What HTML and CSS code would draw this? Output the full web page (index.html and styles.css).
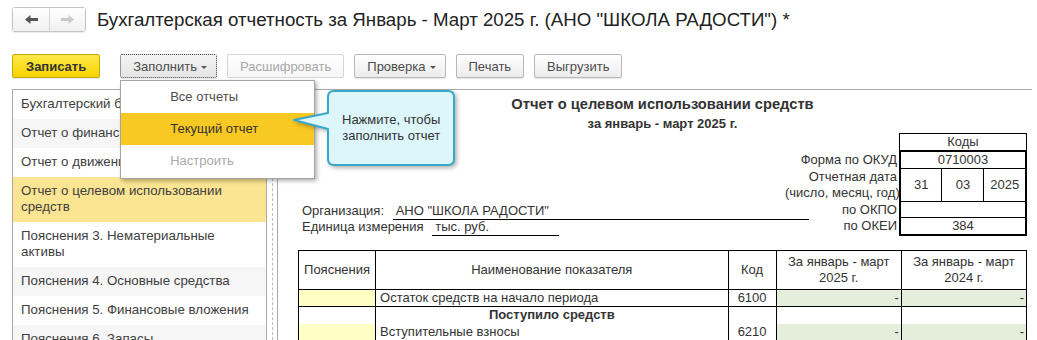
FILE: index.html
```html
<!DOCTYPE html>
<html lang="ru">
<head>
    <meta charset="UTF-8">
    <title>Бухгалтерская отчетность</title>
    <link rel="stylesheet" href="styles.css">
</head>
<body>
    <div class="header">
        <div class="nav">
            <button class="nav-btn" title="Назад">
                <svg width="13" height="9" viewBox="0 0 13 9"><path d="M0 4.5 L5.5 0 V3 H13 V6 H5.5 V9 Z" fill="#555"/></svg>
            </button>
            <button class="nav-btn" title="Вперед">
                <svg width="13" height="9" viewBox="0 0 13 9"><path d="M13 4.5 L7.5 0 V3 H0 V6 H7.5 V9 Z" fill="#c9c9c9"/></svg>
            </button>
        </div>
        <h1>Бухгалтерская отчетность за Январь - Март 2025 г. (АНО "ШКОЛА РАДОСТИ") *</h1>
    </div>

    <div class="toolbar">
        <button class="btn btn-primary">Записать</button>
        <div class="dropdown">
            <button class="btn btn-menu btn-focused">Заполнить<span class="caret"></span></button>
            <div class="menu">
                <div class="menu-item">Все отчеты</div>
                <div class="menu-item active">Текущий отчет</div>
                <div class="menu-item disabled">Настроить</div>

                <!-- hint bubble pointing at the current item -->
                <div class="callout">
                    <svg class="callout-shape" width="170" height="82" viewBox="0 0 170 82">
                        <path d="M43 3 H157 Q163 3 163 9 V71 Q163 77 157 77 H43 Q37 77 37 71 V41 L3 32 L37 25 V9 Q37 3 43 3 Z" fill="#dcf6fc" stroke="#38a8ca" stroke-width="2" stroke-linejoin="round"/>
                    </svg>
                    <div class="callout-text">Нажмите, чтобы<br>заполнить отчет</div>
                </div>
            </div>
        </div>
        <button class="btn" disabled>Расшифровать</button>
        <button class="btn btn-menu">Проверка<span class="caret"></span></button>
        <button class="btn">Печать</button>
        <button class="btn">Выгрузить</button>
    </div>

    <div class="main">
        <div class="sidebar">
            <div class="side-item">Бухгалтерский баланс</div>
            <div class="side-item">Отчет о финансовых результатах</div>
            <div class="side-item">Отчет о движении средств</div>
            <div class="side-item selected">Отчет о целевом использовании средств</div>
            <div class="side-item">Пояснения 3. Нематериальные активы</div>
            <div class="side-item">Пояснения 4. Основные средства</div>
            <div class="side-item">Пояснения 5. Финансовые вложения</div>
            <div class="side-item">Пояснения 6. Запасы</div>
        </div>

        <div class="splitter"></div>

        <div class="report-pane">
            <div class="report">
                <div class="report-title">Отчет о целевом использовании средств</div>
                <div class="report-period">за январь - март 2025 г.</div>

                <div class="report-head">
                    <div class="org">
                        <div class="org-row">
                            <span class="org-label">Организация:</span>
                            <span class="org-value org-name">АНО "ШКОЛА РАДОСТИ"</span>
                        </div>
                        <div class="org-row">
                            <span class="org-label">Единица измерения</span>
                            <span class="org-value org-unit">тыс. руб.</span>
                        </div>
                    </div>

                    <table class="codes">
                        <colgroup>
                            <col class="col-label">
                            <col class="col-code">
                            <col class="col-code">
                            <col class="col-code">
                        </colgroup>
                        <tr class="row-caption">
                            <td class="label"></td>
                            <td class="code" colspan="3">Коды</td>
                        </tr>
                        <tr class="row-okud">
                            <td class="label">Форма по ОКУД</td>
                            <td class="code thick-top thick-side" colspan="3">0710003</td>
                        </tr>
                        <tr class="row-date">
                            <td class="label">Отчетная дата<br>(число, месяц, год)</td>
                            <td class="code thick-left">31</td>
                            <td class="code">03</td>
                            <td class="code thick-right">2025</td>
                        </tr>
                        <tr class="row-okpo">
                            <td class="label">по ОКПО</td>
                            <td class="code thick-side" colspan="3"></td>
                        </tr>
                        <tr class="row-okei">
                            <td class="label">по ОКЕИ</td>
                            <td class="code thick-side thick-bottom" colspan="3">384</td>
                        </tr>
                    </table>
                </div>

                <table class="data">
                    <colgroup>
                        <col class="col-note">
                        <col class="col-name">
                        <col class="col-num">
                        <col class="col-sum">
                        <col class="col-sum">
                    </colgroup>
                    <tr class="head-row">
                        <th>Пояснения</th>
                        <th>Наименование показателя</th>
                        <th>Код</th>
                        <th>За январь - март<br>2025 г.</th>
                        <th>За январь - март<br>2024 г.</th>
                    </tr>
                    <tr>
                        <td class="note"></td>
                        <td class="name">Остаток средств на начало периода</td>
                        <td class="num">6100</td>
                        <td class="sum">-</td>
                        <td class="sum">-</td>
                    </tr>
                    <tr class="group">
                        <td></td>
                        <td class="name group-title">Поступило средств</td>
                        <td></td>
                        <td></td>
                        <td></td>
                    </tr>
                    <tr class="in-group">
                        <td class="note"></td>
                        <td class="name">Вступительные взносы</td>
                        <td class="num">6210</td>
                        <td class="sum">-</td>
                        <td class="sum">-</td>
                    </tr>
                </table>
            </div>
        </div>
    </div>
</body>
</html>
```

FILE: styles.css
```css
* {
    box-sizing: border-box;
}

body {
    margin: 0;
    height: 340px;
    overflow: hidden;
    font-family: "Liberation Sans", Arial, sans-serif;
    font-size: 13px;
    color: #4d4d4d;
    background-color: #fff;
}

/* header */

.header {
    display: flex;
    align-items: center;
    padding: 7px 12px 0;
}

.nav {
    display: flex;
    border: 1px solid #c4c4c4;
    border-radius: 3px;
    box-shadow: 0 1px 1px rgba(0, 0, 0, 0.08);
}

.nav-btn {
    width: 36px;
    height: 23px;
    padding: 0;
    border: none;
    background: linear-gradient(#fff, #f0f0f0);
    display: flex;
    align-items: center;
    justify-content: center;
}

.nav-btn + .nav-btn {
    border-left: 1px solid #d6d6d6;
}

h1 {
    margin: 0 0 0 11px;
    font-size: 18.7px;
    font-weight: normal;
    color: #222;
    line-height: 25px;
    white-space: nowrap;
}

/* toolbar */

.toolbar {
    display: flex;
    gap: 10px;
    margin-top: 22px;
    padding-left: 12px;
}

.btn {
    height: 24px;
    padding: 0 12px;
    font: inherit;
    color: #4d4d4d;
    background: linear-gradient(#fff, #ececec);
    border: 1px solid #b8b8b8;
    border-radius: 2px;
    box-shadow: 0 1px 1px rgba(0, 0, 0, 0.1);
    white-space: nowrap;
}

.btn:disabled {
    color: #a8a8a8;
    border-color: #d4d4d4;
    background: linear-gradient(#fff, #f6f6f6);
    box-shadow: none;
}

.btn-primary {
    margin-right: 10px;
    padding: 0 13px;
    font-weight: bold;
    color: #333;
    background: linear-gradient(#ffe94a, #f6d300);
    border-color: #c6a800;
}

.btn-menu {
    padding: 0 9px 0 12px;
}

.btn-focused {
    background: linear-gradient(#f4f4f4, #e4e4e4);
    border: 1px dotted #444;
}

.caret {
    display: inline-block;
    margin-left: 4px;
    vertical-align: middle;
    border-top: 3px solid #555;
    border-left: 3px solid transparent;
    border-right: 3px solid transparent;
}

.dropdown {
    position: relative;
}

.menu {
    position: absolute;
    top: 26px;
    left: 0;
    z-index: 10;
    width: 195px;
    padding-bottom: 1px;
    background-color: #fff;
    border: 1px solid #a4a4a4;
    box-shadow: 2px 2px 4px rgba(0, 0, 0, 0.3);
}

.menu-item {
    height: 32px;
    line-height: 32px;
    padding-left: 49px;
    color: #4d4d4d;
    white-space: nowrap;
}

.menu-item.active {
    background-color: #f8c923;
    color: #333;
}

.menu-item.disabled {
    color: #aaa;
}

.callout {
    position: absolute;
    left: 170px;
    top: 7px;
    width: 170px;
    height: 82px;
}

.callout-shape {
    display: block;
    filter: drop-shadow(2px 2px 2px rgba(0, 0, 0, 0.3));
}

.callout-text {
    position: absolute;
    left: 39px;
    top: 5px;
    width: 122px;
    height: 70px;
    display: flex;
    align-items: center;
    justify-content: center;
    text-align: center;
    line-height: 16px;
    color: #333;
}

/* main area */

.main {
    display: flex;
    margin-top: 11px;
    height: 251px;
    padding: 0 5px 0 12px;
}

.sidebar {
    width: 255px;
    flex-shrink: 0;
    border: 1px solid #aaa;
    border-bottom: none;
}

.side-item {
    padding: 6px 8px 7px;
    font-size: 13.3px;
    line-height: 16px;
    color: #404040;
}

.side-item:nth-child(even) {
    background-color: #f6f6f6;
}

.side-item.selected {
    background-color: #fbe492;
}

.splitter {
    width: 10px;
    flex-shrink: 0;
    display: flex;
    justify-content: center;
}

.splitter::before {
    content: "";
    border-left: 1px dashed #bdbdbd;
}

.report-pane {
    flex: 1;
    border-top: 1px solid #aaa;
    border-left: 1px solid #aaa;
    padding: 6px 0 0 20px;
    overflow: hidden;
    color: #333;
}

.report {
    width: 729px;
}

.report-title {
    text-align: center;
    font-size: 14.7px;
    font-weight: bold;
    line-height: 17px;
}

.report-period {
    margin-top: 3px;
    text-align: center;
    font-size: 13px;
    font-weight: bold;
    line-height: 15px;
}

.report-head {
    display: flex;
    align-items: flex-end;
    margin-top: 2px;
}

.org {
    flex: 1;
    min-width: 0;
    padding-left: 4px;
    padding-bottom: 1px;
}

.org-row {
    height: 16px;
    line-height: 16px;
    white-space: nowrap;
}

.org-value {
    display: inline-block;
    margin-left: 5px;
    padding-left: 3px;
    border-bottom: 1px solid #000;
}

.org-name {
    width: 416px;
}

.org-unit {
    width: 127px;
}

table {
    border-collapse: collapse;
    table-layout: fixed;
    font-size: 13px;
    color: #333;
}

.codes {
    width: 242px;
}

.col-label {
    width: 115px;
}

.col-code {
    width: 42px;
}

.codes td {
    padding: 0;
    line-height: 16px;
    height: 17px;
}

.codes .label {
    text-align: right;
    padding-right: 2px;
    white-space: nowrap;
}

.codes .code {
    text-align: center;
    border: 1px solid #000;
}

.codes .row-date td {
    height: 33px;
}

.codes .row-okpo td {
    height: 16px;
}

.codes .thick-top {
    border-top: 2px solid #000;
}

.codes .thick-side {
    border-left: 2px solid #000;
    border-right: 2px solid #000;
}

.codes .thick-left {
    border-left: 2px solid #000;
}

.codes .thick-right {
    border-right: 2px solid #000;
}

.codes .thick-bottom {
    border-bottom: 2px solid #000;
}

.data {
    width: 729px;
    margin-top: 14px;
}

.col-note {
    width: 77px;
}

.col-name {
    width: 352px;
}

.col-num {
    width: 48px;
}

.col-sum {
    width: 125px;
}

.data th,
.data td {
    border: 1px solid #000;
    padding: 0 4px;
    line-height: 16px;
    height: 17px;
}

.data th {
    height: 39px;
    font-weight: normal;
    text-align: center;
}

.data .note {
    background-color: #ffffc4;
}

.data .num {
    text-align: center;
}

.data .sum {
    text-align: right;
    padding-right: 2px;
    background-color: #e4eeda;
}

.data .group td {
    border-bottom: none;
}

.data .in-group td {
    border-top: none;
}

.data .group-title {
    text-align: center;
    font-weight: bold;
}
```
